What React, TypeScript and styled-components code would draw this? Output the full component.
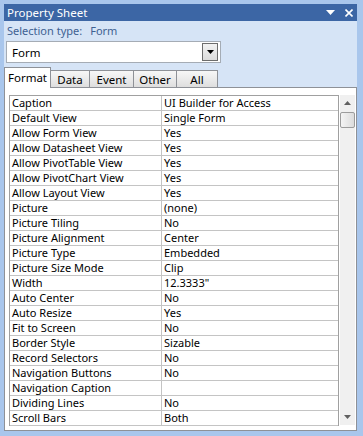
import React from "react";
import styled, { createGlobalStyle } from "styled-components";

const Global = createGlobalStyle`
  html, body { margin: 0; padding: 0; }
  body { width: 363px; height: 436px; overflow: hidden; background: #a9c6ec; }
  * { box-sizing: border-box; }
`;

const Frame = styled.div`
  width: 363px;
  height: 436px;
  padding: 4px 6px 5px 4px;
  background: #a9c6ec;
  display: flex;
`;

const Window = styled.div`
  flex: 1;
  display: flex;
  flex-direction: column;
  background: #d6e4f6;
  font-family: "Noto Sans", "Open Sans", sans-serif;
`;

const TitleBar = styled.div`
  height: 17px;
  background: #3c66a5;
  color: #fff;
  display: flex;
  align-items: center;
  padding: 0 4px 0 3px;
  font-size: 11.5px;
`;

const Title = styled.div`
  flex: 1;
`;

const TitleIcons = styled.div`
  display: flex;
  align-items: center;
  gap: 10px;
`;

const SelectionLine = styled.div`
  color: #3e6192;
  font-size: 11px;
  padding: 1px 3px 0;
  height: 17px;
  display: flex;
  align-items: center;
  gap: 8px;
`;

const Combo = styled.div`
  margin: 3px 0 0 2px;
  width: 215px;
  height: 22px;
  border: 1px solid #a5acb5;
  background: #fff;
  display: flex;
  align-items: center;
  padding: 0 2px 0 5px;
  font-size: 11.5px;
  color: #000;
`;

const ComboText = styled.div`
  flex: 1;
`;

const ComboButton = styled.div`
  width: 16px;
  height: 18px;
  border: 1px solid #6d6d6d;
  background: linear-gradient(#f2f2f2, #dcdcdc);
  display: flex;
  align-items: center;
  justify-content: center;
`;

const Tabs = styled.div`
  display: flex;
  align-items: flex-end;
  margin-top: 4px;
  height: 21px;
  position: relative;
  z-index: 1;
`;

const Tab = styled.div<{ $active?: boolean; $w: number }>`
  width: ${(p) => p.$w}px;
  height: ${(p) => (p.$active ? 21 : 18)}px;
  border: 1px solid #8e9197;
  border-bottom: ${(p) => (p.$active ? "none" : "1px solid #8e9197")};
  margin-left: ${(p) => (p.$active ? 0 : -1)}px;
  background: ${(p) => (p.$active ? "#fff" : "linear-gradient(#f7f7f7, #dedede)")};
  font-size: 11.5px;
  color: #000;
  display: flex;
  align-items: center;
  justify-content: center;
  padding-bottom: ${(p) => (p.$active ? 2 : 0)}px;
`;

const Sheet = styled.div`
  flex: 1;
  margin-top: -1px;
  background: #fff;
  border: 1px solid #8e9197;
  display: flex;
  padding: 7px 1px 4px 4px;
`;

const Grid = styled.div`
  width: 330px;
  border: 1px solid #a0a0a0;
  border-bottom: none;
  align-self: flex-start;
`;

const Row = styled.div`
  display: grid;
  grid-template-columns: 152px 1fr;
  height: 15px;
  border-bottom: 1px solid #c4c4c4;
  font-size: 11px;
  line-height: 14px;
  color: #000;
`;

const Cell = styled.div<{ $label?: boolean }>`
  padding-left: 2px;
  border-right: ${(p) => (p.$label ? "1px solid #c4c4c4" : "none")};
  white-space: nowrap;
  overflow: hidden;
`;

const ScrollBar = styled.div`
  width: 15px;
  height: 330px;
  margin-left: 1px;
  background: #f0f0f0;
  display: flex;
  flex-direction: column;
  align-items: stretch;
`;

const ScrollArrow = styled.div`
  height: 16px;
  display: flex;
  align-items: center;
  justify-content: center;
`;

const Thumb = styled.div`
  height: 16px;
  border: 1px solid #9c9c9c;
  border-radius: 2px;
  background: linear-gradient(90deg, #f4f4f4, #dcdcdc);
  margin-top: 1px;
`;

const Track = styled.div`
  flex: 1;
`;

const rows: [string, string][] = [
  ["Caption", "UI Builder for Access"],
  ["Default View", "Single Form"],
  ["Allow Form View", "Yes"],
  ["Allow Datasheet View", "Yes"],
  ["Allow PivotTable View", "Yes"],
  ["Allow PivotChart View", "Yes"],
  ["Allow Layout View", "Yes"],
  ["Picture", "(none)"],
  ["Picture Tiling", "No"],
  ["Picture Alignment", "Center"],
  ["Picture Type", "Embedded"],
  ["Picture Size Mode", "Clip"],
  ["Width", "12.3333\""],
  ["Auto Center", "No"],
  ["Auto Resize", "Yes"],
  ["Fit to Screen", "No"],
  ["Border Style", "Sizable"],
  ["Record Selectors", "No"],
  ["Navigation Buttons", "No"],
  ["Navigation Caption", ""],
  ["Dividing Lines", "No"],
  ["Scroll Bars", "Both"],
];

const tabs: [string, number][] = [
  ["Format", 47],
  ["Data", 40],
  ["Event", 45],
  ["Other", 44],
  ["All", 42],
];

export default function App() {
  return (
    <>
      <Global />
      <Frame>
        <Window>
          <TitleBar>
            <Title>Property Sheet</Title>
            <TitleIcons>
              <svg width="9" height="5" viewBox="0 0 9 5">
                <path d="M0 0 H9 L4.5 5 Z" fill="#fff" />
              </svg>
              <svg width="8" height="8" viewBox="0 0 8 8">
                <path d="M0.5 0.5 L7.5 7.5 M7.5 0.5 L0.5 7.5" stroke="#fff" strokeWidth="1.6" />
              </svg>
            </TitleIcons>
          </TitleBar>
          <SelectionLine>
            <span>Selection type:</span>
            <span>Form</span>
          </SelectionLine>
          <Combo>
            <ComboText>Form</ComboText>
            <ComboButton>
              <svg width="7" height="4" viewBox="0 0 7 4">
                <path d="M0 0 H7 L3.5 4 Z" fill="#000" />
              </svg>
            </ComboButton>
          </Combo>
          <Tabs>
            {tabs.map(([t, w], i) => (
              <Tab key={t} $active={i === 0} $w={w}>
                {t}
              </Tab>
            ))}
          </Tabs>
          <Sheet>
            <Grid>
              {rows.map(([k, v]) => (
                <Row key={k}>
                  <Cell $label>{k}</Cell>
                  <Cell>{v}</Cell>
                </Row>
              ))}
            </Grid>
            <ScrollBar>
              <ScrollArrow>
                <svg width="7" height="4" viewBox="0 0 7 4">
                  <path d="M0 4 H7 L3.5 0 Z" fill="#606060" />
                </svg>
              </ScrollArrow>
              <Thumb />
              <Track />
              <ScrollArrow>
                <svg width="7" height="4" viewBox="0 0 7 4">
                  <path d="M0 0 H7 L3.5 4 Z" fill="#606060" />
                </svg>
              </ScrollArrow>
            </ScrollBar>
          </Sheet>
        </Window>
      </Frame>
    </>
  );
}
